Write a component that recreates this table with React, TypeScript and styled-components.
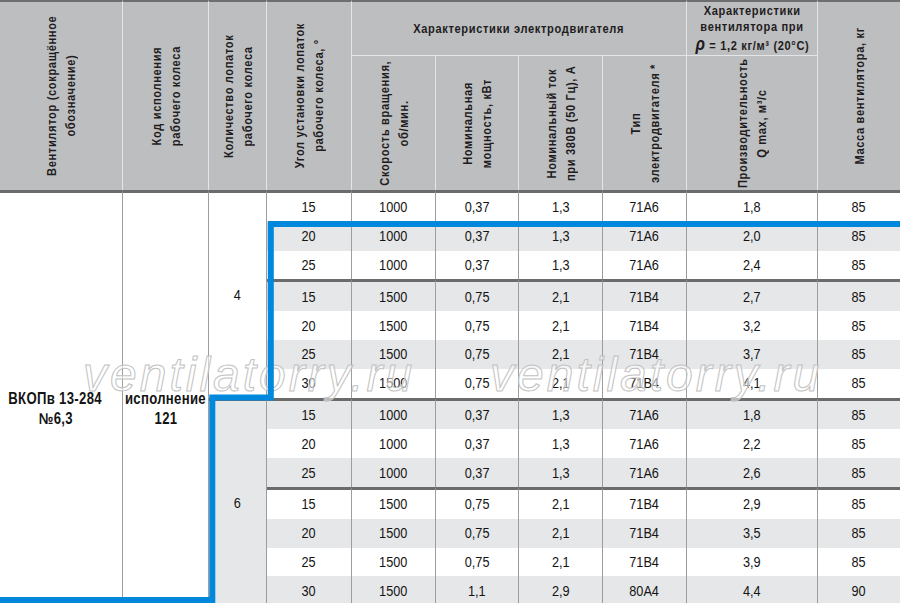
import React from "react";
import styled, { createGlobalStyle } from "styled-components";

const GlobalStyle = createGlobalStyle`
  html, body {
    margin: 0;
    padding: 0;
    background: #ffffff;
  }
`;

const Page = styled.div`
  position: relative;
  width: 900px;
  height: 603px;
  overflow: hidden;
  font-family: "Liberation Sans", Arial, sans-serif;
  color: #141414;
`;

const Table = styled.table`
  width: 900px;
  table-layout: fixed;
  border-collapse: separate;
  border-spacing: 0;
`;

// Liberation Sans squeezed to the width of a condensed face
const Squeeze = styled.span`
  display: inline-block;
  white-space: nowrap;
  transform: scaleX(0.82);
`;

const Stack = styled.div<{ $lh: number }>`
  display: flex;
  flex-direction: column;
  align-items: center;
  line-height: ${(p) => p.$lh}px;
`;

const HeadRow = styled.tr<{ $h: number }>`
  height: ${(p) => p.$h}px;
`;

const HeadCell = styled.th<{ $top?: boolean; $last?: boolean }>`
  padding: 0;
  background: #bcbec0;
  color: #1f1c1d;
  font-size: 13.5px;
  font-weight: 700;
  letter-spacing: 0.8px;
  text-align: center;
  vertical-align: middle;
  border-right: ${(p) => (p.$last ? "none" : "1px solid #e4e5e6")};
  border-top: ${(p) => (p.$top ? "2px solid #6d6e70" : "1px solid #e4e5e6")};
`;

const HeadBox = styled.div<{ $h: number }>`
  height: ${(p) => p.$h}px;
  display: flex;
  align-items: center;
  justify-content: center;
`;

const Rho = styled.span`
  font-size: 19px;
  font-style: italic;
`;

// vertical header label, read from bottom to top
const VLabel = styled.div`
  flex: none;
  writing-mode: vertical-rl;
  transform: rotate(180deg) scaleY(0.82);
  line-height: 19px;
  text-align: center;
  white-space: nowrap;
`;

const BodyRow = styled.tr<{ $edge: boolean; $shade: boolean }>`
  height: ${(p) => (p.$edge ? 31.8 : 28.8)}px;
  background: ${(p) => (p.$shade ? "#e6e7e8" : "#ffffff")};
`;

const Cell = styled.td<{ $edge: boolean; $last?: boolean }>`
  padding: 0;
  font-size: 15.5px;
  text-align: center;
  vertical-align: middle;
  border-right: ${(p) => (p.$last ? "none" : "1px solid #9d9d9d")};
  border-top: ${(p) => (p.$edge ? "3px solid #6b6b6b" : "none")};
`;

const MergedCell = styled.td<{ $shade?: boolean; $bold?: boolean; $shift?: number }>`
  padding: ${(p) => p.$shift ?? 0}px 0 0 0;
  background: ${(p) => (p.$shade ? "#e6e7e8" : "#ffffff")};
  font-size: ${(p) => (p.$bold ? 16 : 15.5)}px;
  font-weight: ${(p) => (p.$bold ? 700 : 400)};
  letter-spacing: ${(p) => (p.$bold ? "0.4px" : "0")};
  text-align: center;
  vertical-align: middle;
  border-right: 1px solid #9d9d9d;
  border-top: 3px solid #6b6b6b;
`;

const Overlay = styled.svg`
  position: absolute;
  left: 0;
  top: 0;
  pointer-events: none;
`;

const Watermark = styled.div<{ $x: number }>`
  position: absolute;
  top: 351px;
  left: ${(p) => p.$x}px;
  font-family: "Liberation Sans", Arial, sans-serif;
  font-style: italic;
  font-size: 48px;
  line-height: 48px;
  letter-spacing: 3px;
  color: rgba(255, 255, 255, 0.55);
  -webkit-text-stroke: 1px #c2c2c2;
  white-space: nowrap;
  pointer-events: none;
`;

const widths = [123, 86, 58, 85, 84, 83, 84, 84, 131, 82];

type Row = [string, string, string, string, string, string, string];

const rows: Row[] = [
  ["15", "1000", "0,37", "1,3", "71А6", "1,8", "85"],
  ["20", "1000", "0,37", "1,3", "71А6", "2,0", "85"],
  ["25", "1000", "0,37", "1,3", "71А6", "2,4", "85"],
  ["15", "1500", "0,75", "2,1", "71В4", "2,7", "85"],
  ["20", "1500", "0,75", "2,1", "71В4", "3,2", "85"],
  ["25", "1500", "0,75", "2,1", "71В4", "3,7", "85"],
  ["30", "1500", "0,75", "2,1", "71В4", "4,1", "85"],
  ["15", "1000", "0,37", "1,3", "71А6", "1,8", "85"],
  ["20", "1000", "0,37", "1,3", "71А6", "2,2", "85"],
  ["25", "1000", "0,37", "1,3", "71А6", "2,6", "85"],
  ["15", "1500", "0,75", "2,1", "71В4", "2,9", "85"],
  ["20", "1500", "0,75", "2,1", "71В4", "3,5", "85"],
  ["25", "1500", "0,75", "2,1", "71В4", "3,9", "85"],
  ["30", "1500", "1,1", "2,9", "80А4", "4,4", "90"],
];

const groupStarts = [0, 3, 7, 10];

const Label: React.FC<{ h: number; lines: React.ReactNode[] }> = ({ h, lines }) => (
  <HeadBox $h={h}>
    <VLabel>
      {lines.map((l, i) => (
        <React.Fragment key={i}>
          {i > 0 && <br />}
          {l}
        </React.Fragment>
      ))}
    </VLabel>
  </HeadBox>
);

const Lines: React.FC<{ lh: number; lines: React.ReactNode[] }> = ({ lh, lines }) => (
  <Stack $lh={lh}>
    {lines.map((l, i) => (
      <Squeeze key={i}>{l}</Squeeze>
    ))}
  </Stack>
);

const FULL = 188;
const SUB = 134;

const App: React.FC = () => {
  return (
    <>
      <GlobalStyle />
      <Page>
        <Table>
          <colgroup>
            {widths.map((w, i) => (
              <col key={i} style={{ width: w }} />
            ))}
          </colgroup>
          <thead>
            <HeadRow $h={55}>
              <HeadCell $top rowSpan={2}>
                <Label h={FULL} lines={["Вентилятор (сокращённое", "обозначение)"]} />
              </HeadCell>
              <HeadCell $top rowSpan={2}>
                <Label h={FULL} lines={["Код исполнения", "рабочего колеса"]} />
              </HeadCell>
              <HeadCell $top rowSpan={2}>
                <Label h={FULL} lines={["Количество лопаток", "рабочего колеса"]} />
              </HeadCell>
              <HeadCell $top rowSpan={2}>
                <Label h={FULL} lines={["Угол установки лопаток", "рабочего колеса, °"]} />
              </HeadCell>
              <HeadCell $top colSpan={4}>
                <Lines lh={18} lines={["Характеристики электродвигателя"]} />
              </HeadCell>
              <HeadCell $top>
                <Lines
                  lh={16.5}
                  lines={[
                    "Характеристики",
                    "вентилятора при",
                    <>
                      <Rho>ρ</Rho> = 1,2 кг/м³ (20°С)
                    </>,
                  ]}
                />
              </HeadCell>
              <HeadCell $top $last rowSpan={2}>
                <Label h={FULL} lines={["Масса вентилятора, кг"]} />
              </HeadCell>
            </HeadRow>
            <HeadRow $h={135}>
              <HeadCell>
                <Label h={SUB} lines={["Скорость вращения,", "об/мин."]} />
              </HeadCell>
              <HeadCell>
                <Label h={SUB} lines={["Номинальная", "мощность, кВт"]} />
              </HeadCell>
              <HeadCell>
                <Label h={SUB} lines={["Номинальный ток", "при 380В (50 Гц), А"]} />
              </HeadCell>
              <HeadCell>
                <Label h={SUB} lines={["Тип", "электродвигателя *"]} />
              </HeadCell>
              <HeadCell>
                <Label h={SUB} lines={["Производительность", "Q max, м³/с"]} />
              </HeadCell>
            </HeadRow>
          </thead>
          <tbody>
            {rows.map((r, i) => {
              const edge = groupStarts.includes(i);
              return (
                <BodyRow key={i} $edge={edge} $shade={i % 2 === 1}>
                  {i === 0 && (
                    <>
                      <MergedCell rowSpan={14} $bold $shift={20} style={{ paddingRight: 11 }}>
                        <Lines lh={20} lines={["ВКОПв 13-284", "№6,3"]} />
                      </MergedCell>
                      <MergedCell rowSpan={14} $bold $shift={20}>
                        <Lines lh={20} lines={["исполнение", "121"]} />
                      </MergedCell>
                      <MergedCell rowSpan={7}>
                        <Squeeze>4</Squeeze>
                      </MergedCell>
                    </>
                  )}
                  {i === 7 && (
                    <MergedCell rowSpan={7} $shade>
                      <Squeeze>6</Squeeze>
                    </MergedCell>
                  )}
                  {r.map((v, j) => (
                    <Cell key={j} $edge={edge} $last={j === r.length - 1}>
                      <Squeeze>{v}</Squeeze>
                    </Cell>
                  ))}
                </BodyRow>
              );
            })}
          </tbody>
        </Table>

        <Watermark $x={83}>ventilatorry.ru</Watermark>
        <Watermark $x={490}>ventilatorry.ru</Watermark>

        <Overlay width={900} height={603} viewBox="0 0 900 603">
          <polyline
            points="905,224 270.8,224 270.8,397.5 212.3,397.5 212.3,600 -5,600"
            fill="none"
            stroke="#0089dc"
            strokeWidth={6}
            strokeLinejoin="miter"
          />
        </Overlay>
      </Page>
    </>
  );
};

export default App;
